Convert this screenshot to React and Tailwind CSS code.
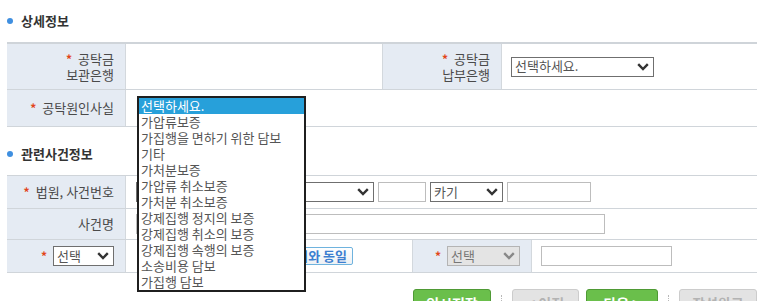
import React from 'react';

const OPTIONS = [
  '선택하세요.',
  '가압류보증',
  '가집행을 면하기 위한 담보',
  '기타',
  '가처분보증',
  '가압류 취소보증',
  '가처분 취소보증',
  '강제집행 정지의 보증',
  '강제집행 취소의 보증',
  '강제집행 속행의 보증',
  '소송비용 담보',
  '가집행 담보',
];

function Chevron({ color = '#333' }) {
  return (
    <svg width="12" height="8" viewBox="0 0 12 8" className="shrink-0">
      <path d="M1.2 1.2l4.8 4.8 4.8-4.8" fill="none" stroke={color} strokeWidth="2.4" />
    </svg>
  );
}

function FakeSelect({ value, className = '', disabled = false }) {
  return (
    <div
      className={`flex h-[20px] items-center justify-between border pl-[3px] pr-[4px] ${
        disabled ? 'border-[#b4b4b4] bg-[#e4e4e4] text-[#777]' : 'border-[#6f6f6f] bg-white text-[#555]'
      } ${className}`}
    >
      <span className="-mt-[2px] leading-none">{value}</span>
      <Chevron color={disabled ? '#888' : '#333'} />
    </div>
  );
}

function Star() {
  return <span className="mr-[6px] text-[12px] font-bold text-[#e2451a]">*</span>;
}

function SectionTitle({ children, className = '' }) {
  return (
    <div className={`flex items-center pl-[7px] ${className}`}>
      <span className="mr-[8px] h-[6px] w-[6px] rounded-full bg-[#3f8fe0]" />
      <span className="text-[13px] font-bold text-[#333]">{children}</span>
    </div>
  );
}

function Label({ children, className = '' }) {
  return (
    <div
      className={`flex items-center justify-end border-r border-[#d3d8dd] bg-[#e5ebf3] pr-[11px] text-right text-[13px] leading-4 text-[#4a4a4a] ${className}`}
    >
      {children}
    </div>
  );
}

export default function App() {
  return (
    <div className="relative h-[301px] w-[760px] overflow-hidden bg-white font-['Noto_Sans_CJK_KR',sans-serif] text-[13px]">
      {/* 상세정보 */}
      <SectionTitle className="h-[42px]">상세정보</SectionTitle>
      <div className="ml-[7px] w-[750px] border-t-2 border-[#cfd4d9]">
        <div className="flex h-[46px] border-b border-[#d0d5da]">
          <Label className="w-[119px]">
            <div>
              <Star />공탁금
              <br />
              보관은행
            </div>
          </Label>
          <div className="w-[256px]" />
          <Label className="w-[120px] border-l border-l-[#d3d8dd]">
            <div>
              <Star />공탁금
              <br />
              납부은행
            </div>
          </Label>
          <div className="flex flex-1 items-center pl-[9px]">
            <FakeSelect value="선택하세요." className="w-[143px]" />
          </div>
        </div>
        <div className="flex h-[37px] border-b border-[#d0d5da]">
          <Label className="w-[119px]">
            <div>
              <Star />공탁원인사실
            </div>
          </Label>
          <div className="flex-1" />
        </div>
      </div>

      {/* 관련사건정보 */}
      <SectionTitle className="h-[48px] pt-[6px]">관련사건정보</SectionTitle>
      <div className="ml-[7px] w-[750px] border-t border-[#cfd4d9]">
        <div className="flex h-[33px] border-b border-[#d0d5da]">
          <Label className="w-[119px]">
            <div>
              <Star />법원, 사건번호
            </div>
          </Label>
          <div className="flex flex-1 items-center gap-[4px] pl-[10px]">
            <FakeSelect value="" className="w-[238px]" />
            <div className="h-[20px] w-[48px] border border-[#bdbdbd]" />
            <FakeSelect value="카기" className="w-[73px]" />
            <div className="h-[20px] w-[84px] border border-[#bdbdbd]" />
          </div>
        </div>
        <div className="flex h-[31px] border-b border-[#d0d5da]">
          <Label className="w-[119px]">사건명</Label>
          <div className="flex flex-1 items-center pl-[10px]">
            <div className="h-[20px] w-[469px] border border-[#bdbdbd]" />
          </div>
        </div>
        <div className="flex h-[33px] border-b border-[#d0d5da]">
          <Label className="w-[119px] pr-[9px]">
            <Star />
            <FakeSelect value="선택" className="w-[61px] text-left" />
          </Label>
          <div className="flex w-[286px] items-center justify-end pr-[59px]">
            <div className="flex h-[18px] items-center rounded-[2px] border border-[#6fb3de] bg-gradient-to-b from-white to-[#eef1f4] px-[5px] text-[13px] font-bold text-[#3d7fd0]">
              주소지와 동일
            </div>
          </div>
          <Label className="w-[120px] border-l border-l-[#d3d8dd] pr-[10px]">
            <Star />
            <FakeSelect value="선택" disabled className="w-[73px] text-left" />
          </Label>
          <div className="flex flex-1 items-center pl-[9px]">
            <div className="h-[20px] w-[131px] border border-[#bdbdbd]" />
          </div>
        </div>
      </div>

      {/* buttons */}
      <div className="mt-[16px] flex w-[757px] justify-end">
        <button className="h-[26px] w-[78px] rounded-t-[3px] border border-[#4f9a35] bg-[#6abf4b] pt-[3px] text-[14px] font-bold text-white">
          임시저장
        </button>
        <div className="mx-[10px] mt-[6px] h-[20px] border-l border-dotted border-[#b8b8b8]" />
        <button className="h-[26px] w-[67px] rounded-t-[3px] border border-[#cccccc] bg-[#e3e3e3] pt-[3px] text-[14px] font-bold text-[#b3b3b3]">
          &lt; 이전
        </button>
        <button className="ml-[7px] h-[26px] w-[72px] rounded-t-[3px] border border-[#4f9a35] bg-[#6abf4b] pt-[3px] text-[14px] font-bold text-white">
          다음 &gt;
        </button>
        <div className="mx-[10px] mt-[6px] h-[20px] border-l border-dotted border-[#b8b8b8]" />
        <button className="h-[26px] w-[78px] rounded-t-[3px] border border-[#cccccc] bg-[#e3e3e3] pt-[3px] text-[14px] font-bold text-[#b3b3b3]">
          작성완료
        </button>
      </div>

      {/* open dropdown list */}
      <ul className="absolute left-[137px] top-[96px] w-[169px] border-2 border-[#1f1f1f] bg-white">
        {OPTIONS.map((opt, i) => (
          <li
            key={opt}
            className={`h-[16px] pl-[2px] text-[13px] leading-[16px] ${
              i === 0 ? 'bg-[#27a0da] text-white' : 'text-[#555]'
            }`}
          >
            {opt}
          </li>
        ))}
      </ul>
    </div>
  );
}
